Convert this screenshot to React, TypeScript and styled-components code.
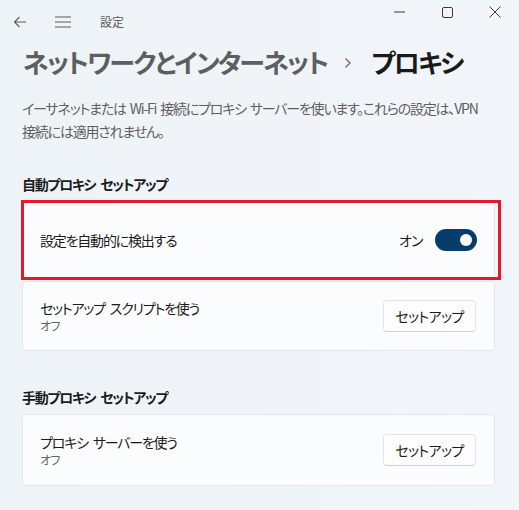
import React from "react";
import styled, { createGlobalStyle } from "styled-components";

const Global = createGlobalStyle`
  html, body { margin: 0; padding: 0; }
  body {
    width: 519px;
    height: 510px;
    overflow: hidden;
    font-family: "Noto Sans CJK JP", "Noto Sans", sans-serif;
    font-feature-settings: "palt";
    background: linear-gradient(90deg, #eef3f8 0%, #f0f4f9 60%, #f2f5fa 100%);
    color: #1b1b1b;
  }
`;

const Page = styled.div`
  width: 519px;
  height: 510px;
  display: flex;
  flex-direction: column;
`;

const TitleBar = styled.div`
  height: 42px;
  display: flex;
  align-items: flex-start;
  justify-content: space-between;
`;

const NavGroup = styled.div`
  height: 42px;
  display: flex;
  align-items: center;
  padding-left: 13px;
  padding-top: 2px;
  box-sizing: border-box;
`;

const NavIcon = styled.span<{ $gap: number }>`
  display: flex;
  align-items: center;
  margin-right: ${(p) => p.$gap}px;
  color: #5a5a5a;
`;

const AppName = styled.span`
  font-size: 12px;
  color: #5a5a5a;
  line-height: 16px;
`;

const Caption = styled.div`
  display: flex;
`;

const CaptionButton = styled.div`
  width: 48px;
  height: 24px;
  display: flex;
  align-items: center;
  justify-content: center;
  color: #3a3a3a;
`;

const Header = styled.h1`
  margin: 0;
  padding-left: 23px;
  height: 40px;
  display: flex;
  align-items: center;
  white-space: nowrap;
  font-size: 26px;
  letter-spacing: -1.8px;
  line-height: 40px;
  font-weight: 600;
`;

const Crumb = styled.span`
  color: #5e5e5e;
`;

const Current = styled.span`
  color: #1a1a1a;
  font-weight: 700;
`;

const Chevron = styled.span`
  display: flex;
  align-items: center;
  margin: 2px 19px 0 17px;
  color: #6a6a6a;
`;

const Description = styled.p`
  margin: 15px 0 0;
  padding: 0 20px 0 22px;
  font-size: 14px;
  letter-spacing: -1.2px;
  word-spacing: 2px;
  line-height: 23px;
  color: #5f5f5f;
`;

const SectionTitle = styled.h2<{ $top: number }>`
  margin: ${(p) => p.$top}px 0 7px;
  padding-left: 22px;
  font-size: 14px;
  letter-spacing: -1.3px;
  word-spacing: 3px;
  line-height: 20px;
  font-weight: 700;
  color: #1b1b1b;
`;

const CardList = styled.div`
  display: flex;
  flex-direction: column;
  gap: 3px;
  padding: 0 24px 0 22px;
`;

const Highlight = styled.div`
  position: relative;
  &::after {
    content: "";
    position: absolute;
    top: -1px;
    left: -1px;
    right: -6px;
    bottom: -2px;
    border: 3px solid #e8162a;
    pointer-events: none;
  }
`;

const Card = styled.div<{ $h: number }>`
  height: ${(p) => p.$h}px;
  box-sizing: border-box;
  background: #fbfcfd;
  border: 1px solid #e3e6ea;
  border-radius: 4px;
  display: flex;
  align-items: center;
  justify-content: space-between;
  padding: 0 17px 0 17px;
`;

const TextBlock = styled.div`
  display: flex;
  flex-direction: column;
`;

const CardTitle = styled.span`
  font-size: 14px;
  letter-spacing: -1.2px;
  word-spacing: 3px;
  line-height: 20px;
  color: #1b1b1b;
`;

const CardSub = styled.span`
  font-size: 12px;
  letter-spacing: -0.6px;
  line-height: 16px;
  color: #656565;
`;

const ToggleGroup = styled.div`
  display: flex;
  align-items: center;
  gap: 12px;
`;

const ToggleLabel = styled.span`
  font-size: 14px;
  letter-spacing: -0.6px;
  line-height: 20px;
  color: #1b1b1b;
`;

const Toggle = styled.div`
  width: 42px;
  height: 22px;
  border-radius: 11px;
  background: #063d6d;
  display: flex;
  align-items: center;
  justify-content: flex-end;
  padding-right: 5px;
  box-sizing: border-box;
`;

const Knob = styled.div`
  width: 12px;
  height: 12px;
  border-radius: 50%;
  background: #ffffff;
`;

const Button = styled.button`
  width: 93px;
  height: 32px;
  box-sizing: border-box;
  background: #fdfdfd;
  border: 1px solid #e2e4e7;
  border-bottom-color: #cfd2d6;
  border-radius: 4px;
  font-family: inherit;
  font-feature-settings: "palt";
  font-size: 14px;
  letter-spacing: -0.6px;
  color: #1b1b1b;
  padding: 0;
  margin-right: 1px;
`;

export default function App() {
  return (
    <Page>
      <Global />
      <TitleBar>
        <NavGroup>
          <NavIcon $gap={28}>
            <svg width="14" height="12" viewBox="0 0 14 12" fill="none" stroke="currentColor" strokeWidth="1.1">
              <path d="M13 6H1.5M6.5 1L1.5 6l5 5" />
            </svg>
          </NavIcon>
          <NavIcon $gap={29}>
            <svg width="16" height="12" viewBox="0 0 16 12" fill="none" stroke="currentColor" strokeWidth="1.1">
              <path d="M0 1h16M0 6h16M0 11h16" />
            </svg>
          </NavIcon>
          <AppName>設定</AppName>
        </NavGroup>
        <Caption>
          <CaptionButton>
            <svg width="11" height="2" viewBox="0 0 11 2" stroke="currentColor" strokeWidth="1">
              <path d="M0 1h11" />
            </svg>
          </CaptionButton>
          <CaptionButton>
            <svg width="11" height="11" viewBox="0 0 11 11" fill="none" stroke="currentColor" strokeWidth="1">
              <rect x="0.5" y="0.5" width="10" height="10" rx="1.5" />
            </svg>
          </CaptionButton>
          <CaptionButton>
            <svg width="12" height="12" viewBox="0 0 12 12" fill="none" stroke="currentColor" strokeWidth="1">
              <path d="M0.5 0.5l11 11M11.5 0.5l-11 11" />
            </svg>
          </CaptionButton>
        </Caption>
      </TitleBar>

      <Header>
        <Crumb>ネットワークとインターネット</Crumb>
        <Chevron>
          <svg width="8" height="12" viewBox="0 0 8 12" fill="none" stroke="currentColor" strokeWidth="1.3">
            <path d="M1.5 1.5L6 6l-4.5 4.5" />
          </svg>
        </Chevron>
        <Current>プロキシ</Current>
      </Header>

      <Description>
        イーサネットまたは Wi-Fi 接続にプロキシ サーバーを使います。これらの設定は、VPN
        <br />
        接続には適用されません。
      </Description>

      <SectionTitle $top={31}>自動プロキシ セットアップ</SectionTitle>
      <CardList>
        <Highlight>
          <Card $h={77}>
            <CardTitle>設定を自動的に検出する</CardTitle>
            <ToggleGroup>
              <ToggleLabel>オン</ToggleLabel>
              <Toggle>
                <Knob />
              </Toggle>
            </ToggleGroup>
          </Card>
        </Highlight>
        <Card $h={70}>
          <TextBlock>
            <CardTitle>セットアップ スクリプトを使う</CardTitle>
            <CardSub>オフ</CardSub>
          </TextBlock>
          <Button>セットアップ</Button>
        </Card>
      </CardList>

      <SectionTitle $top={36}>手動プロキシ セットアップ</SectionTitle>
      <CardList>
        <Card $h={72}>
          <TextBlock>
            <CardTitle>プロキシ サーバーを使う</CardTitle>
            <CardSub>オフ</CardSub>
          </TextBlock>
          <Button>セットアップ</Button>
        </Card>
      </CardList>
    </Page>
  );
}
